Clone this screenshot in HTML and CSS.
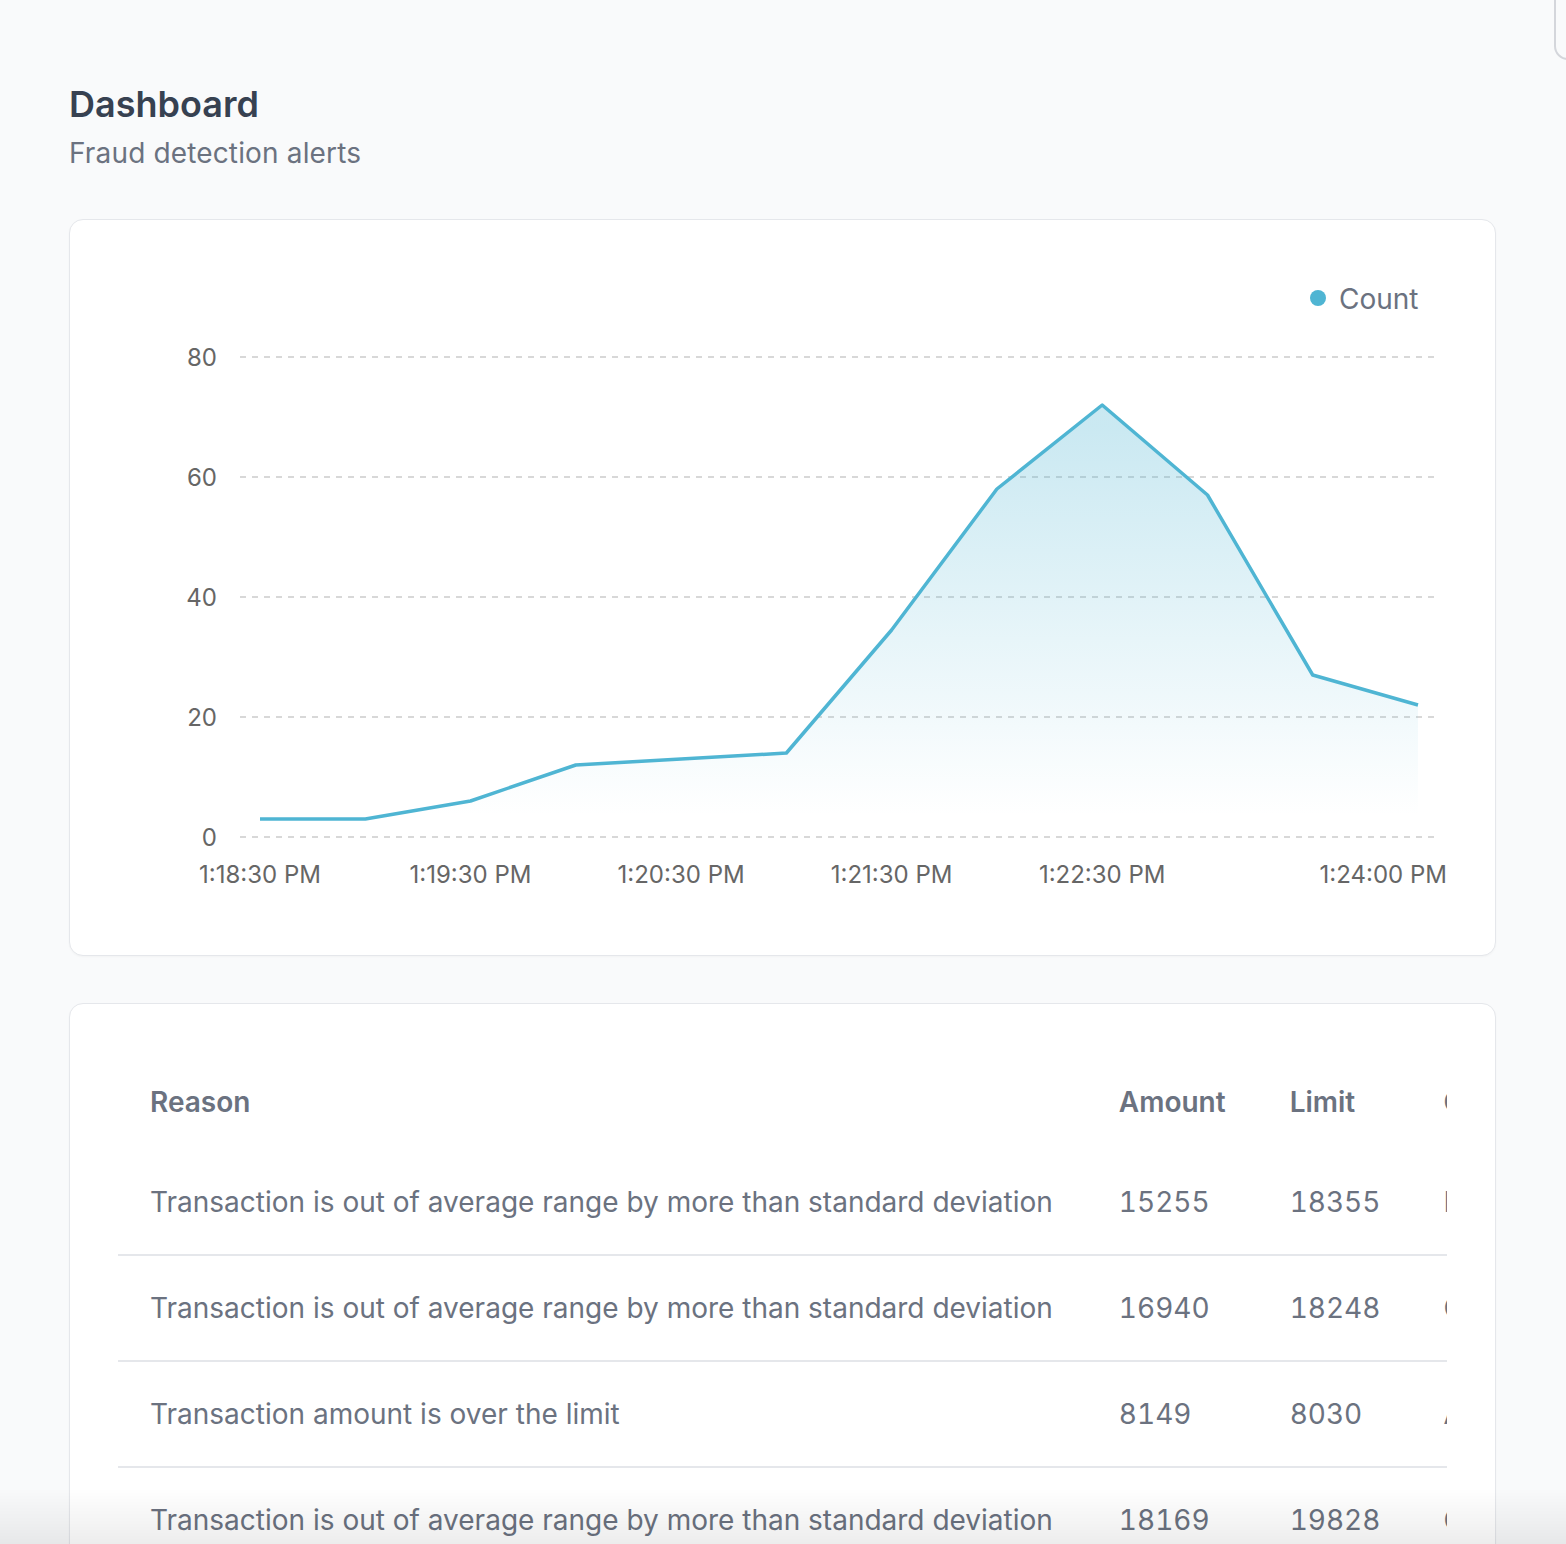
FILE: index.html
```html
<!DOCTYPE html>
<html lang="en">
<head>
<meta charset="utf-8">
<title>Dashboard</title>
<link rel="stylesheet" href="styles.css">
</head>
<body>
<div class="corner-widget"></div>
<main class="page">
  <header class="page-header">
    <h1 class="title">Dashboard</h1>
    <p class="subtitle">Fraud detection alerts</p>
  </header>

  <section class="card chart-card">
    <svg class="chart" width="1329" height="640" viewBox="0 0 1329 640" xmlns="http://www.w3.org/2000/svg">
      <defs>
        <linearGradient id="fillGrad" x1="0" y1="0" x2="0" y2="1">
          <stop offset="5%" stop-color="#4fb5d3" stop-opacity="0.3"/>
          <stop offset="95%" stop-color="#4fb5d3" stop-opacity="0"/>
        </linearGradient>
      </defs>
      <g class="grid">
        <line x1="122" y1="89" x2="1317" y2="89"/>
        <line x1="122" y1="209" x2="1317" y2="209"/>
        <line x1="122" y1="329" x2="1317" y2="329"/>
        <line x1="122" y1="449" x2="1317" y2="449"/>
        <line x1="122" y1="569" x2="1317" y2="569"/>
      </g>
      <g class="ytick">
        <text x="99" y="98">80</text>
        <text x="99" y="218">60</text>
        <text x="99" y="338">40</text>
        <text x="99" y="458">20</text>
        <text x="99" y="578">0</text>
      </g>
      <path class="area" d="M142,551 L247.3,551 L352.5,533 L457.8,497 L563.1,491 L668.4,485 L773.6,362 L878.9,221 L984.2,137 L1089.5,227 L1194.7,407 L1300,437 L1300,569 L142,569 Z"/>
      <path class="line" d="M142,551 L247.3,551 L352.5,533 L457.8,497 L563.1,491 L668.4,485 L773.6,362 L878.9,221 L984.2,137 L1089.5,227 L1194.7,407 L1300,437"/>
      <g class="xtick">
        <text x="142" y="615">1:18:30 PM</text>
        <text x="352.5" y="615">1:19:30 PM</text>
        <text x="563.1" y="615">1:20:30 PM</text>
        <text x="773.6" y="615">1:21:30 PM</text>
        <text x="984.2" y="615">1:22:30 PM</text>
        <text x="1329" y="615" class="end">1:24:00 PM</text>
      </g>
      <g class="legend">
        <circle cx="1200" cy="30" r="8"/>
        <text x="1221" y="41">Count</text>
      </g>
    </svg>
  </section>

  <section class="card table-card">
    <div class="table-wrap">
      <table class="alerts">
        <thead>
          <tr>
            <th>Reason</th>
            <th>Amount</th>
            <th>Limit</th>
            <th>Card</th>
            <th>Merchant</th>
          </tr>
        </thead>
        <tbody>
          <tr>
            <td>Transaction is out of average range by more than standard deviation</td>
            <td class="num">15255</td>
            <td class="num">18355</td>
            <td>Electronics</td>
            <td>Store 12</td>
          </tr>
          <tr>
            <td>Transaction is out of average range by more than standard deviation</td>
            <td class="num">16940</td>
            <td class="num">18248</td>
            <td>Clothing</td>
            <td>Store 4</td>
          </tr>
          <tr>
            <td>Transaction amount is over the limit</td>
            <td class="num">8149</td>
            <td class="num">8030</td>
            <td>Automotive</td>
            <td>Store 9</td>
          </tr>
          <tr>
            <td>Transaction is out of average range by more than standard deviation</td>
            <td class="num">18169</td>
            <td class="num">19828</td>
            <td>Groceries</td>
            <td>Store 7</td>
          </tr>
          <tr>
            <td>Transaction amount is over the limit</td>
            <td class="num">9021</td>
            <td class="num">8800</td>
            <td>Travel</td>
            <td>Store 2</td>
          </tr>
        </tbody>
      </table>
    </div>
  </section>
</main>
<div class="bottom-fade"></div>
</body>
</html>
```

FILE: styles.css
```css
html, body {
  margin: 0;
  padding: 0;
}

body {
  background: #f9fafb;
  font-family: Inter, "Noto Sans", "Liberation Sans", sans-serif;
  color: #374151;
  overflow: hidden;
}

.page {
  padding: 84px 70px 60px 69px;
}

.page-header {
  margin-bottom: 46px;
}

.title {
  margin: 0;
  font-size: 36px;
  line-height: 40px;
  font-weight: 600;
  color: #374151;
}

.subtitle {
  margin: 9px 0 0 0;
  font-size: 28px;
  line-height: 40px;
  letter-spacing: 0.15px;
  color: #6b7280;
}

.card {
  background: #ffffff;
  border: 1px solid #e5e7eb;
  border-radius: 14px;
  padding: 48px;
  box-shadow: 0 1px 2px rgba(0, 0, 0, 0.03);
}

.chart-card {
  height: 639px;
  margin-bottom: 47px;
}

.chart {
  display: block;
  font-family: Inter, "Noto Sans", "Liberation Sans", sans-serif;
}

.grid line {
  stroke: #cccccc;
  stroke-width: 1.5;
  stroke-dasharray: 6 6;
}

.ytick text {
  font-size: 24px;
  fill: #666666;
  text-anchor: end;
}

.xtick text {
  font-size: 24px;
  fill: #666666;
  text-anchor: middle;
}

.xtick text.end {
  text-anchor: end;
}

.area {
  fill: url(#fillGrad);
  stroke: none;
}

.line {
  fill: none;
  stroke: #4fb5d3;
  stroke-width: 3.5;
  stroke-linejoin: round;
}

.legend circle {
  fill: #4fb5d3;
}

.legend text {
  font-size: 28px;
  fill: #6b7280;
}

.table-card {
  padding-bottom: 48px;
}

.table-wrap {
  overflow: hidden;
}

.alerts {
  border-collapse: collapse;
  white-space: nowrap;
  font-size: 28px;
  line-height: 40px;
  color: #6b7280;
}

.alerts th {
  text-align: left;
  font-weight: 600;
  padding: 30px 32px 28px 32px;
}

.alerts td {
  padding: 32px 32px;
}

.alerts th:first-child,
.alerts td:first-child {
  padding-right: 34px;
}

.alerts th:nth-child(3),
.alerts td:nth-child(3) {
  padding-right: 31px;
}

.alerts td.num {
  font-feature-settings: "tnum" 1;
  font-variant-numeric: tabular-nums;
}

.alerts tbody tr {
  border-bottom: 2px solid #e5e7eb;
}

.corner-widget {
  position: fixed;
  top: -20px;
  right: -60px;
  width: 68px;
  height: 76px;
  border: 2px solid #d4d6db;
  border-radius: 14px;
  background: #f9fafb;
}

.bottom-fade {
  position: fixed;
  left: 0;
  right: 0;
  bottom: 0;
  height: 56px;
  background: linear-gradient(to bottom, rgba(0, 0, 0, 0), rgba(0, 0, 0, 0.07));
  pointer-events: none;
}
```
